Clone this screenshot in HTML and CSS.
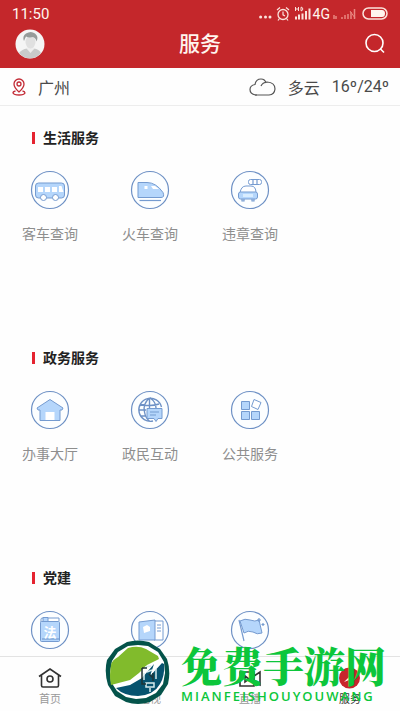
FILE: index.html
```html
<!DOCTYPE html>
<html lang="zh-CN">
<head>
<meta charset="utf-8">
<meta name="viewport" content="width=device-width, initial-scale=1">
<title>服务</title>
<link rel="stylesheet" href="styles.css">
</head>
<body>
<div class="app">
  <header class="header">
    <div class="status">
      <span class="clock">11:50</span>
      <div class="signals">
        <svg width="52" height="16" viewBox="0 0 52 16" fill="none" stroke="#fbe3dc">
          <g fill="#fbe3dc" stroke="none"><circle cx="1.600" cy="11" r="1.500"/><circle cx="6.500" cy="11" r="1.500"/><circle cx="11" cy="11" r="1.500"/></g>
          <circle cx="24" cy="8.500" r="5" stroke-width="1.300"/><path d="M24 5.500v3.300l2 1.200M18 4l3-2.500M30 4l-3-2.500M20.500 12.500l-1.500 2M27.500 12.500l1.500 2" stroke-width="1.200"/>
          <path d="M36.500 1v4M39.500 1v4M36.500 3h3M42 1.300v3.400h1q1.800-1.700 0-3.400z" stroke-width="1"/>
          <path d="M37 13.500v-3M40 13.500v-5M43.500 13.500v-6M47 13.500v-8.500M50.500 13.500v-11" stroke-width="2"/>
        </svg>
        <span class="network">4G</span>
        <svg width="24" height="16" viewBox="0 0 24 16" fill="none" stroke="#e98780">
          <path d="M2 9v4M4 10v3M10 13v-2M13 13v-4M16 13v-5M19 13V6M22.500 13V3" stroke-width="1.500"/><path d="M18 5l5 7" stroke-width="1"/>
        </svg>
        <svg class="battery" width="26" height="13" viewBox="0 0 26 13"><rect x="1" y="1" width="24" height="11" rx="5.500" fill="none" stroke="#fbe3dc" stroke-width="1.500"/><path d="M9 3h11q3 0 3 3.500T20 10H9z" fill="#fff5ee"/></svg>
      </div>
    </div>
    <div class="titlebar">
      <button class="round" aria-label="个人中心">
        <svg width="30" height="30" viewBox="0 0 30 30"><circle cx="15" cy="15" r="14.500" fill="#f5f5f5"/><path d="M4 24q3-4 8-4.500V16h7v3.500q5 .5 7 4.500a14 14 0 0 1-22 0z" fill="#c9caca"/><path d="M11.500 19.500 15.500 24l4-4.500-1-3h-6z" fill="#eee"/><ellipse cx="15.500" cy="13" rx="5" ry="6.500" fill="#e0e0e0"/><path d="M9 12Q7 7 11 4.500q5-3 9 0 4 3 1.500 8Q21 9 18 8q-4 1-7-.5Q10 9 9 12z" fill="#969b9a"/></svg>
      </button>
      <h1>服务</h1>
      <button class="round" aria-label="搜索">
        <svg width="22" height="22" viewBox="0 0 22 22" fill="none" stroke="#fff" stroke-width="1.600"><circle cx="10.500" cy="10" r="8.500"/><path d="m16.500 16 3.500 3.500"/></svg>
      </button>
    </div>
  </header>

  <div class="weather">
    <svg width="14" height="18" viewBox="0 0 14 18" fill="none" stroke="#c32b36" stroke-width="1.300"><path d="M7 14Q2 9.500 2 6a5 5 0 0 1 10 0q0 3.500-5 8z"/><circle cx="7" cy="6" r="2"/><path d="M3.500 13Q1 13.500 1 15q1 2 6 2t6-2q0-1.500-2.500-2"/></svg>
    <span class="city">广州</span>
    <svg width="28" height="20" viewBox="0 0 28 20" fill="none" stroke="#555" stroke-width="1.200"><path d="M8 18H6.500Q1 17 1 12.500q0-4 5-5Q7 2 12 2q4 0 5 4"/><path d="M12 9q1.500-3.500 6-4 8 .5 8 7-.5 5.500-6 6H6"/></svg>
    <span class="sky">多云</span>
    <span class="degrees">16º/24º</span>
  </div>

  <main class="content">
    <section>
      <h2>生活服务</h2>
      <div class="grid">
        <a class="item" href="#bus">
          <svg class="icon" viewBox="0 0 40 40"><circle class="ring" cx="20" cy="20" r="18.500"/><rect x="5.500" y="13" width="29" height="15" rx="3" class="soft"/><path d="M8 17h5v5H8zM15 17h5v5h-5zM22 17h5v5h-5zM29 16h2.500l2 6H29z" fill="#fff"/><g class="open"><circle cx="13.500" cy="27.500" r="3"/><circle cx="25.500" cy="27.500" r="3"/></g></svg>
          <span>客车查询</span></a>
        <a class="item" href="#train">
          <svg class="icon" viewBox="0 0 40 40"><circle class="ring" cx="20" cy="20" r="18.500"/><path class="soft" d="M8 12.500h9q9 0 16 10 2 5-2 5H8z"/><path d="M14.500 16h3v3h-3zM21 16h4l4 3h-6z" fill="#fff"/><path class="line" d="M9.500 30.500H31"/></svg>
          <span>火车查询</span></a>
        <a class="item" href="#violation">
          <svg class="icon" viewBox="0 0 40 40"><circle class="ring" cx="20" cy="20" r="18.500"/><rect class="open" x="18.500" y="9.500" width="13" height="5" rx="2"/><path class="line" d="M23 10v4M27 10v4"/><path class="open" d="M10 23q1-7 6-7h5q5 0 5 7z"/><rect class="soft" x="8.500" y="22" width="19" height="7" rx="2"/><path d="M13 24h10v3H13z" fill="#d9edff"/><path class="line" d="M12 29v2h2v-2M22 29v2h2v-2"/></svg>
          <span>违章查询</span></a>
      </div>
    </section>
    <section>
      <h2>政务服务</h2>
      <div class="grid">
        <a class="item" href="#hall">
          <svg class="icon" viewBox="0 0 40 40"><circle class="ring" cx="20" cy="20" r="18.500"/><path class="soft" d="m20 9.500 13 8.500-1 2h-2v10.500H10V20H8l-1-2z"/><path d="M15.500 22h9v8h-9z" fill="#fff"/></svg>
          <span>办事大厅</span></a>
        <a class="item" href="#interaction">
          <svg class="icon" viewBox="0 0 40 40"><circle class="ring" cx="20" cy="20" r="18.500"/><path class="globe" d="M31.500 17A11.500 11.500 0 1 0 23 31M19.500 8v11M19.500 8q-7 6-5 14 1 6 5 9M20 8q6 4 6 10M10 14q10 3 19 0M8.500 20H16M10 26h6"/><path class="soft" d="M17 18.500h15v10h-4l-2 3-2-3h-7z"/><path class="line" d="M20 22h9M20 25h6"/></svg>
          <span>政民互动</span></a>
        <a class="item" href="#public">
          <svg class="icon" viewBox="0 0 40 40"><circle class="ring" cx="20" cy="20" r="18.500"/><path class="soft" d="M11.500 11.500h8v8h-8zM11.500 21.500h8v8h-8zM21.500 21.500h8v8h-8z"/><path class="open" d="m24 9.500 7 3-3 7-6.500-3z"/></svg>
          <span>公共服务</span></a>
      </div>
    </section>
    <section>
      <h2>党建</h2>
      <div class="grid">
        <a class="item" href="#law" aria-label="党建法规">
          <svg class="icon" viewBox="0 0 40 40"><circle class="ring" cx="20" cy="20" r="18.500"/><path class="open" d="M11 12V9q0-1 2-1h16v3"/><rect class="soft" x="10.500" y="11.500" width="19" height="20" rx="1"/><path class="soft" d="M13 7.500h5v4h-5z"/><path class="line" d="M12 29h17"/><text x="20" y="27" class="glyph">法</text></svg></a>
        <a class="item" href="#news" aria-label="党建资讯">
          <svg class="icon" viewBox="0 0 40 40"><circle class="ring" cx="20" cy="20" r="18.500"/><path class="open" d="M24 11h9v19h-9zM27 15h4M27 18h4M27 21h4"/><path class="soft" d="m9 12 16-2v20H9z"/><path d="m13 17 4-2 3 2v4l-6 2z" fill="#fff"/></svg></a>
        <a class="item" href="#flag" aria-label="党旗">
          <svg class="icon" viewBox="0 0 40 40"><circle class="ring" cx="20" cy="20" r="18.500"/><path class="soft" d="M10 11q5-3 10-1 5 2 9 0l3 13q-5 2-9-1-5-2-9 1z"/><path class="line" d="m9 10 5 21M29 8v4M27 10h4M33 13v3M31.500 14.500h3"/></svg></a>
      </div>
    </section>
  </main>

  <nav class="tabs">
    <a href="#home"><svg width="24" height="22" viewBox="0 0 24 22" fill="none" stroke="#333" stroke-width="1.600"><path d="M1 9.500 12 2l11 7.500M3.500 8v10.500q0 1.500 1.500 1.500h14q1.500 0 1.500-1.500V8"/><circle cx="12" cy="12" r="3"/></svg><span>首页</span></a>
    <a href="#video"><svg width="24" height="22" viewBox="0 0 24 22" fill="none" stroke="#333" stroke-width="1.600"><rect x="5" y="3" width="14" height="17" rx="1"/><path d="M8 7h8M10 10l5 3-5 3z"/></svg><span>电视</span></a>
    <a href="#live"><svg width="24" height="22" viewBox="0 0 24 22" fill="none" stroke="#333" stroke-width="1.600"><path d="M2 5h14v14H2zM16 9l6-4v13l-6-3M7 9l4 3-4 3z"/></svg><span>直播</span></a>
    <a href="#service" class="active" aria-current="page"><svg width="24" height="22" viewBox="0 0 24 22"><circle cx="11.500" cy="11" r="10.500" fill="#c9252c"/><path d="m6 15 9-9-1 10-3-3z" fill="#fff"/></svg><span>服务</span></a>
  </nav>

  <div class="brand">
    <svg width="68" height="66" viewBox="0 0 68 66">
      <path d="M23 2q11-3 22 0l11 7 7 10q4 12 1 25l-7 11-11 7q-12 4-24 0L11 56 4 45Q0 32 3 20l8-11z" fill="#04534a"/>
      <path d="m24 6 10-1 10 1 10 6 6 10 1 11-2 11-7 9-10 5-10 1-10-2-9-6-6-9-1-10 2-11 6-9z" fill="#fff"/>
      <path d="M24 8q10-3 18 1l12 7 1 3-12 6-8 8-9 7-19 5Q5 36 7 25q1-5 7-8z" fill="#81bb2c"/>
      <path d="m12 48 14-3 12-7 12-14-4 12 12-13 2 1q1 12-4 20-6 11-22 12-14 0-22-8z" fill="#07536f"/>
      <path d="m41 27 6-1M40 33v7M52 29v10M43 32l5-2M42 43h8v4h-8zM46 48v4" fill="none" stroke="#d7eced" stroke-width="1.500"/>
      <path d="M38 28h5M38 28v16h4M45 34l4 4M49 33v8" fill="none" stroke="#203436" stroke-width="1.500"/>
    </svg>
    <div class="brand-text"><strong>免费手游网</strong><span>MIANFEISHOUYOUWANG</span></div>
  </div>
</div>
</body>
</html>
```
FILE: styles.css
```css
* { box-sizing: border-box; }
body {
  margin: 0;
  background: #fefefe;
  color: #222;
  font-family: Roboto, "Noto Sans CJK SC", sans-serif;
}
svg { display: block; flex: none; }
a { color: inherit; text-decoration: none; }
h1, h2 { margin: 0; }
.app {
  position: relative;
  display: flex;
  flex-direction: column;
  height: 100vh;
  overflow: hidden;
}
.header {
  flex: none;
  background: #c4272b;
  color: #fff5ee;
  padding: 1px 12px 6px;
}
.status {
  display: flex;
  justify-content: space-between;
  align-items: center;
  height: 25px;
}
.clock { font-size: 15px; }
.signals { display: flex; align-items: center; gap: 2px; }
.network { font-size: 14px; line-height: 16px; }
.battery { margin-left: 4px; }
.titlebar {
  display: flex;
  justify-content: space-between;
  align-items: center;
  height: 36px;
}
.titlebar h1 { font-size: 21px; line-height: 32px; font-weight: 500; }
.round {
  display: flex;
  align-items: center;
  justify-content: center;
  width: 36px;
  height: 32px;
  padding: 0;
  border: 0;
  background: none;
}
.round:last-child { justify-content: flex-end; padding-right: 2px; }
.weather {
  flex: none;
  display: flex;
  align-items: center;
  height: 38px;
  padding: 0 11px 0 12px;
  border-bottom: 1px solid #ededed;
  color: #4a4a4a;
  font-size: 16px;
}
.city { margin: 0 auto 0 12px; }
.sky { margin: 0 12px 0 11px; }
.content { flex: 1; min-height: 0; overflow: hidden; }
section { min-height: 220px; padding-top: 22px; }
h2 {
  display: flex;
  align-items: center;
  gap: 8px;
  margin: 0 0 22px 32px;
  font-size: 14px;
  line-height: 20px;
  font-weight: 700;
}
h2::before { content: ""; width: 3px; height: 12px; background: #e52330; }
.grid { display: grid; grid-template-columns: repeat(4, 1fr); }
.item {
  display: flex;
  flex-direction: column;
  align-items: center;
  gap: 13px;
  color: #8e8e8e;
  font-size: 14px;
  line-height: 22px;
}
.icon { width: 40px; height: 40px; }
.ring { fill: #fcfeff; stroke: #6e91c5; stroke-width: 1.2; }
.soft { fill: #b5d6fb; stroke: #759bd0; stroke-width: 1; }
.open { fill: #fff; stroke: #759bd0; stroke-width: 1; }
.line { fill: none; stroke: #759bd0; stroke-width: 1.2; }
.globe { fill: none; stroke: #6e91c5; stroke-width: 1.4; }
.glyph { fill: #fff; font-size: 13px; font-weight: 700; text-anchor: middle; }
.tabs {
  flex: none;
  display: grid;
  grid-template-columns: repeat(4, 1fr);
  height: 55px;
  padding-top: 10px;
  border-top: 1px solid #e3e3e3;
  background: #fefefe;
}
.tabs a {
  display: flex;
  flex-direction: column;
  align-items: center;
  gap: 3px;
  color: #999;
  font-size: 11px;
  line-height: 16px;
}
.tabs .active { color: #333; }
.brand {
  position: absolute;
  bottom: 5px;
  left: 26%;
  display: flex;
  align-items: center;
  gap: 9px;
  color: #0cc63b;
  pointer-events: none;
}
.brand-text { display: flex; flex-direction: column; white-space: nowrap; }
.brand strong {
  font-family: "Noto Serif CJK SC", "Noto Sans CJK SC", serif;
  font-size: 41px;
  line-height: 46px;
  font-weight: 900;
}
.brand span {
  font-family: "Open Sans", sans-serif;
  font-size: 13px;
  line-height: 16px;
  font-weight: 600;
  letter-spacing: 2px;
}
```
